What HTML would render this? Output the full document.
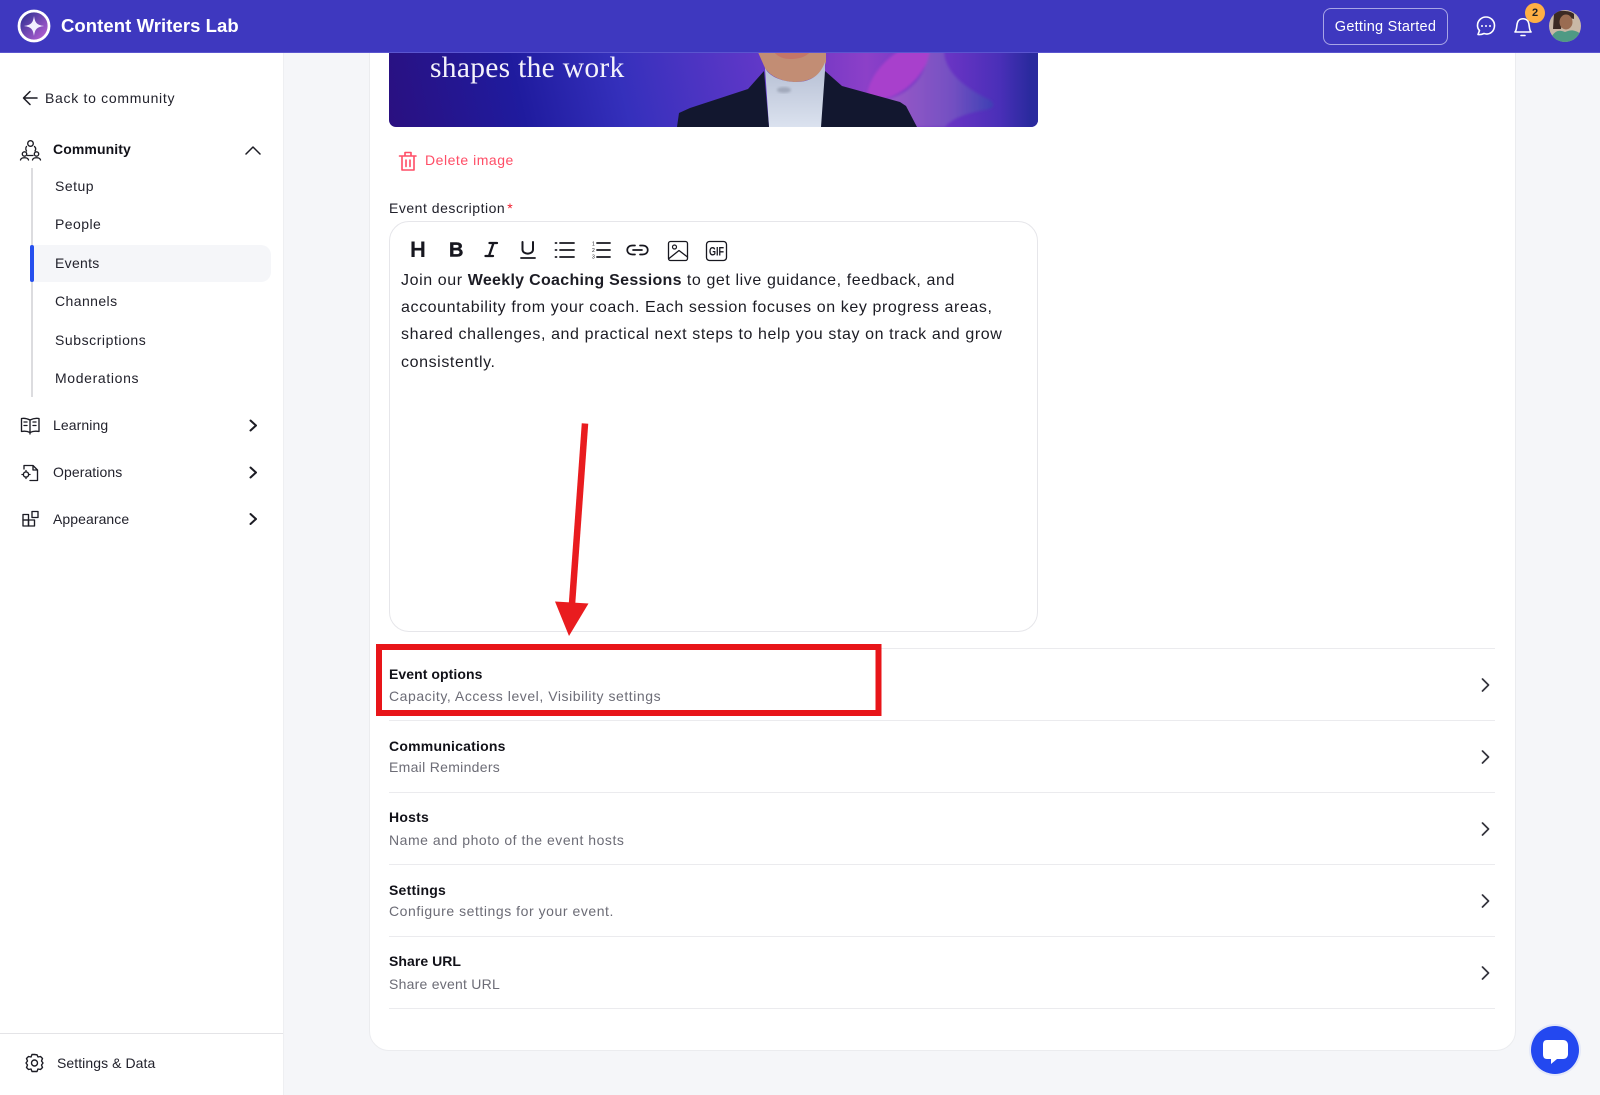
<!DOCTYPE html>
<html lang="en"><head><meta charset="utf-8"><title>Content Writers Lab</title>
<style>
*{box-sizing:border-box;margin:0;padding:0}
html,body{width:1600px;height:1095px;overflow:hidden;background:#f5f6f9;font-family:"Liberation Sans",sans-serif;color:#17171f}
.a{position:absolute;white-space:nowrap}
.t{position:absolute;white-space:nowrap;font-size:14px;line-height:20px;letter-spacing:.28px;color:#22222c}
.h{font-weight:700;color:#111118;letter-spacing:.22px}
.s{color:#6c6c76;letter-spacing:.55px}
.d{position:absolute;left:389px;width:1106px;height:1px;background:#ebebee}
.p{position:absolute;left:401px;font-size:16px;line-height:24px;letter-spacing:.595px;white-space:nowrap;color:#1c1c24}
</style></head><body>
<div class="a" style="left:0;top:52px;width:284px;height:1043px;background:#fff;border-right:1px solid #eeeff2"></div>
<div class="a" style="left:0;top:1033px;width:283px;height:1px;background:#e4e4e7"></div>
<div class="a" style="left:369px;top:30px;width:1147px;height:1021px;background:#fff;border:1px solid #ebecef;border-radius:20px"></div>
<svg class="a" style="left:389px;top:40px" width="650" height="88" viewBox="389 40 650 88">
<defs>
<linearGradient id="bg" x1="389" y1="127" x2="760" y2="40" gradientUnits="userSpaceOnUse"><stop offset="0" stop-color="#2a1080"/><stop offset=".35" stop-color="#1f1b9e"/><stop offset=".62" stop-color="#3530bc"/><stop offset="1" stop-color="#6238c8"/></linearGradient>
<linearGradient id="ring" x1="825" y1="0" x2="1030" y2="0" gradientUnits="userSpaceOnUse"><stop offset="0" stop-color="#7a3ac6"/><stop offset=".2" stop-color="#8c40c8"/><stop offset=".6" stop-color="#6a34c4"/><stop offset=".85" stop-color="#4a2fb8"/><stop offset="1" stop-color="#2a2a9e"/></linearGradient>
<linearGradient id="star" x1="880" y1="0" x2="992" y2="0" gradientUnits="userSpaceOnUse"><stop offset="0" stop-color="#a059c8"/><stop offset=".65" stop-color="#7350c2"/><stop offset="1" stop-color="#3f40b4"/></linearGradient>
<linearGradient id="neck" x1="0" y1="0" x2="0" y2="1"><stop offset="0" stop-color="#b4bdd2"/><stop offset="1" stop-color="#dbe2ef"/></linearGradient>
<filter id="bl" x="-10%" y="-10%" width="120%" height="120%"><feGaussianBlur stdDeviation="1.2"/></filter>
<clipPath id="ic"><path d="M389 40H1038V120a7 7 0 0 1-7 7H396a7 7 0 0 1-7-7Z"/></clipPath>
</defs>
<g clip-path="url(#ic)">
<rect x="389" y="40" width="650" height="88" fill="url(#bg)"/>
<path d="M760 40H1040V128H880Z" fill="url(#ring)"/>
<g filter="url(#bl)">
<path d="M867 95C870 75 885 60 900 50H932C925 70 915 85 895 95C885 100 875 100 867 95Z" fill="#a840cc"/>
<path d="M860 127C862 112 880 102 897 96C918 86 926 70 930 50H944C944 72 965 88 990 100C995 104 995 108 985 110C965 113 950 120 945 127Z" fill="url(#star)"/>
</g>
<path d="M757 50H826L826 62C822 76 808 82 795 82C782 82 770 76 765 68Z" fill="#c28d74"/>
<path d="M774 52H810C805 58 796 59 790 59C784 59 778 57 774 52Z" fill="#c47668"/>
<path d="M765 68C770 78 785 82 796 82C810 82 820 76 825 62V127H769Z" fill="url(#neck)"/>
<ellipse cx="784" cy="90" rx="7" ry="3" fill="#7f8699" opacity=".5" filter="url(#bl)"/>
<path d="M677 127L679 113L690 108L748 89L764 71L769 127Z" fill="#12172f"/>
<path d="M825 71L842 86L900 102L906 106L917 127H821Z" fill="#12172f"/>
</g>
</svg>
<div class="a" style="left:430px;top:49px;font:29.5px/38px 'Liberation Serif',serif;color:#f4f2fb;letter-spacing:.3px">shapes the work</div>

<div class="a" style="left:0;top:0;width:1600px;height:53px;background:#3e38bf;border-bottom:1px solid #5a55cf"></div>
<div class="a" style="left:61px;top:13px;font-size:18.5px;line-height:26px;font-weight:700;color:#fff;letter-spacing:.07px">Content Writers Lab</div>
<div class="a" style="left:1323px;top:8px;width:125px;height:37px;border:1px solid #a9a6e6;border-radius:8px;color:#fff;font-size:14.5px;line-height:37px;text-align:center;letter-spacing:.26px">Getting Started</div>
<div class="a" style="left:1525px;top:3px;width:20px;height:20px;border-radius:50%;background:#ffb045;color:#222;font-size:11px;font-weight:700;line-height:20px;text-align:center">2</div>

<div class="t" style="left:45px;top:88px;letter-spacing:.7px">Back to community</div>
<div class="t h" style="left:53px;top:139px;letter-spacing:.1px">Community</div>
<div class="a" style="left:31px;top:168px;width:2px;height:229px;background:#dcdcdf"></div>
<div class="a" style="left:30px;top:245px;width:241px;height:37px;background:#f5f6f9;border-radius:0 10px 10px 0"></div>
<div class="a" style="left:30px;top:245px;width:4px;height:37px;background:#2650ee;border-radius:2px"></div>
<div class="t" style="left:55px;top:176px;letter-spacing:.48px">Setup</div>
<div class="t" style="left:55px;top:214px;letter-spacing:.45px">People</div>
<div class="t" style="left:55px;top:253px;letter-spacing:.3px">Events</div>
<div class="t" style="left:55px;top:291px;letter-spacing:.42px">Channels</div>
<div class="t" style="left:55px;top:330px;letter-spacing:.56px">Subscriptions</div>
<div class="t" style="left:55px;top:368px;letter-spacing:.65px">Moderations</div>
<div class="t" style="left:53px;top:415px;letter-spacing:.1px">Learning</div>
<div class="t" style="left:53px;top:462px;letter-spacing:.08px">Operations</div>
<div class="t" style="left:53px;top:509px;letter-spacing:.07px">Appearance</div>
<div class="t" style="left:57px;top:1053px;letter-spacing:.07px">Settings &amp; Data</div>

<div class="t" style="left:425px;top:150px;color:#ff4d66;letter-spacing:.53px">Delete image</div>
<div class="t" style="left:389px;top:198px;letter-spacing:.52px">Event description<span style="color:#f01a2a;margin-left:2px">*</span></div>
<div class="a" style="left:389px;top:221px;width:649px;height:411px;border:1px solid #e6e6ea;border-radius:20px"></div>
<div class="p" style="top:269px">Join our <b style="letter-spacing:.3px">Weekly Coaching Sessions</b> to get live guidance, feedback, and</div>
<div class="p" style="top:296px">accountability from your coach. Each session focuses on key progress areas,</div>
<div class="p" style="top:323px">shared challenges, and practical next steps to help you stay on track and grow</div>
<div class="p" style="top:351px">consistently.</div>

<div class="d" style="top:648px"></div><div class="d" style="top:720px"></div><div class="d" style="top:792px"></div><div class="d" style="top:864px"></div><div class="d" style="top:936px"></div><div class="d" style="top:1008px"></div>
<div class="t h" style="left:389px;top:664px;letter-spacing:.07px">Event options</div><div class="t s" style="left:389px;top:686px;">Capacity, Access level, Visibility settings</div>
<div class="t h" style="left:389px;top:736px">Communications</div><div class="t s" style="left:389px;top:757px;letter-spacing:.3px">Email Reminders</div>
<div class="t h" style="left:389px;top:807px">Hosts</div><div class="t s" style="left:389px;top:830px;letter-spacing:.53px">Name and photo of the event hosts</div>
<div class="t h" style="left:389px;top:880px">Settings</div><div class="t s" style="left:389px;top:901px">Configure settings for your event.</div>
<div class="t h" style="left:389px;top:951px;letter-spacing:.05px">Share URL</div><div class="t s" style="left:389px;top:974px;letter-spacing:.24px">Share event URL</div>

<svg class="a" style="left:0;top:0" width="1600" height="1095" viewBox="0 0 1600 1095" fill="none">
<defs><linearGradient id="lg" x1="0" y1="0" x2="1" y2="1"><stop offset="0" stop-color="#1f2a8a"/><stop offset="1" stop-color="#c766dd"/></linearGradient>
<clipPath id="avc"><circle cx="1565" cy="26" r="16"/></clipPath></defs>
<circle cx="34" cy="26" r="15" fill="url(#lg)" stroke="#fff" stroke-width="2.8"/>
<path d="M34 16C35 23 37 25 44 26C37 27 35 29 34 36C33 29 31 27 24 26C31 25 33 23 34 16Z" fill="#f3efff"/>
<g stroke="#fff" stroke-width="1.6" stroke-linecap="round" stroke-linejoin="round">
<path d="M1478 34.5C1481 35 1483 34 1484 33.5C1490 35.5 1494.5 31 1494.5 25.5C1494.5 20.5 1490.5 17 1486 17C1481.5 17 1477.5 20.5 1477.5 25.5C1477.5 27.5 1478.5 29.5 1479.5 30.5Z"/>
<path d="M1515 32C1517 30 1516.5 25 1517.5 22.5C1519 17.5 1527 17.5 1528.5 22.5C1529.5 25 1529 30 1531 32Z"/>
<path d="M1521 35.5H1525"/>
</g>
<g fill="#fff"><circle cx="1482" cy="26" r="1"/><circle cx="1486" cy="26" r="1"/><circle cx="1490" cy="26" r="1"/></g>
<g clip-path="url(#avc)"><rect x="1549" y="10" width="32" height="32" fill="#c9b8a6"/><path d="M1554 13C1558 10 1570 10 1574 14V19C1567 17 1562 20 1561 29H1553Z" fill="#3b2a24"/><ellipse cx="1566" cy="22" rx="6.5" ry="7.5" fill="#9a6c52"/><path d="M1552 36C1556 30 1560 30 1565 32C1570 30 1574 29 1581 34V42H1552Z" fill="#4f9a84"/></g>

<g stroke="#1c1c24" stroke-width="1.5" stroke-linecap="round" stroke-linejoin="round">
<path d="M37 98H24M30 91.5L23.5 98L30 104.5"/>
<path d="M246 154L253 147L260 154"/>
<g stroke-width="1.35"><circle cx="30.5" cy="143.5" r="2.8"/><path d="M26.5 151C25 148.5 26.5 146.5 26.5 146.5M34.5 146.5C36 148 36 149.5 35 151"/><circle cx="24.5" cy="154" r="2.2"/><circle cx="36.5" cy="154" r="2.2"/><path d="M20.5 160C21 157 28 157 28.5 160M32.5 160C33 157 40 157 40.5 160M27.5 155.5H33"/></g>
<g stroke-width="1.35"><path d="M30 420C27 418.5 24 418 21.5 418.5V431.5C24 431 27 431 30 432.5C33 431 36 431 39 431.5V418.5C36 418 33 418.5 30 420ZM30 420V434"/><path d="M24 422H27M24 425.5H27M33 422H36M33 425.5H36"/></g>
<g stroke-width="1.35"><path d="M24 469V465.5H33L37.5 470V480.5H30M33 465.5V470H37.5"/><circle cx="26" cy="474.5" r="2.6"/><path d="M22.5 474.5H22M29.5 474.5H30M26 471V470.5M26 478V478.5"/></g>
<g stroke-width="1.35"><rect x="23" y="514.5" width="5.5" height="5.5"/><rect x="23" y="520" width="5.5" height="6"/><rect x="28.5" y="520" width="6" height="6"/><rect x="32" y="511.5" width="6" height="6"/></g>
<path d="M250.5 420.5L256 425.5L250.5 430.5M250.5 467.5L256 472.5L250.5 477.5M250.5 514L256 519L250.5 524" stroke-width="2"/>
<g stroke-width="1.4"><path d="M34.5 1054.5L37 1054.8L38 1057L40.5 1056.5L42.5 1058.5L41.5 1061L43 1063L41.5 1065L42.5 1067.5L40.5 1069.5L38 1069L37 1071.5H32L31 1069L28.5 1069.5L26.5 1067.5L27.5 1065L26 1063L27.5 1061L26.5 1058.5L28.5 1056.5L31 1057L32 1054.5Z"/><circle cx="34.5" cy="1063" r="3"/></g>
<path d="M1482.5 679L1488.5 685L1482.5 691M1482.5 751L1488.5 757L1482.5 763M1482.5 823L1488.5 829L1482.5 835M1482.5 895L1488.5 901L1482.5 907M1482.5 967L1488.5 973L1482.5 979" stroke="#33333c" stroke-width="1.7"/>
</g>
<g stroke="#ff4d66" stroke-width="1.6" stroke-linecap="round" stroke-linejoin="round"><path d="M402 157V170H414V157M399.5 156H416M405 155.5V152.5H411V155.5M406 160V166.5M410 160V166.5"/></g>

<g fill="#17171f" font-family="Liberation Sans, sans-serif"><text x="410" y="257" font-size="22" font-weight="700">H</text><text x="449" y="256.5" font-size="20" font-weight="700" stroke="#17171f" stroke-width=".4">B</text></g>
<g stroke="#17171f" stroke-width="1.8" stroke-linecap="round" stroke-linejoin="round">
<path d="M489.5 243H497M485.5 256H493M493.5 243L489 256" stroke-width="2.3"/>
<path d="M522.5 242V249.5C522.5 255 533 255 533 249.5V242" stroke-width="2"/><path d="M521 258H535" stroke-width="1.8"/>
<path d="M560 243H574M560 250H574M560 257H574M555.5 243H556.5M555.5 250H556.5M555.5 257H556.5"/>
<path d="M597 243H610M597 250H610M597 257H610"/>
<path d="M635 245.5H632.5C625.5 245.5 625.5 254.5 632.5 254.5H635M640 245.5H642.5C649.5 245.5 649.5 254.5 642.5 254.5H640M633 250H642" stroke-width="1.7"/>
<rect x="668.5" y="241.5" width="19" height="19" rx="2" stroke-width="1.3"/><circle cx="674.5" cy="247" r="2" stroke-width="1.2"/><path d="M669 258.5L679 250.5L687.5 257" stroke-width="1.3"/>
<rect x="706.5" y="241.5" width="20" height="19" rx="3" stroke-width="1.3"/>
</g>
<text x="592" y="245.5" font-size="5" fill="#17171f" font-family="Liberation Sans, sans-serif">1</text><text x="592" y="252" font-size="5" fill="#17171f" font-family="Liberation Sans, sans-serif">2</text><text x="592" y="258.5" font-size="5" fill="#17171f" font-family="Liberation Sans, sans-serif">3</text>
<text x="716.5" y="255.5" text-anchor="middle" font-size="12" font-weight="700" fill="#17171f" font-family="Liberation Sans, sans-serif" textLength="15" lengthAdjust="spacingAndGlyphs">GIF</text>

<path d="M585 423.5L572 604" stroke="#e91c1f" stroke-width="6.5"/>
<path d="M555 601.5L588.5 603.5L569 636Z" fill="#e91c1f"/>
<rect x="379" y="647" width="499.5" height="66" stroke="#e81519" stroke-width="6"/>

<circle cx="1555" cy="1050" r="26" fill="#2348f0" opacity=".08"/>
<circle cx="1555" cy="1050" r="24" fill="#2348f0"/>
<path d="M1547 1040H1563C1566 1040 1568 1042 1568 1045V1054C1568 1057 1566 1059 1563 1059H1557L1551 1064V1059H1547C1544 1059 1543 1057 1543 1054V1045C1543 1042 1544 1040 1547 1040Z" fill="#fff"/>
</svg>
</body></html>
